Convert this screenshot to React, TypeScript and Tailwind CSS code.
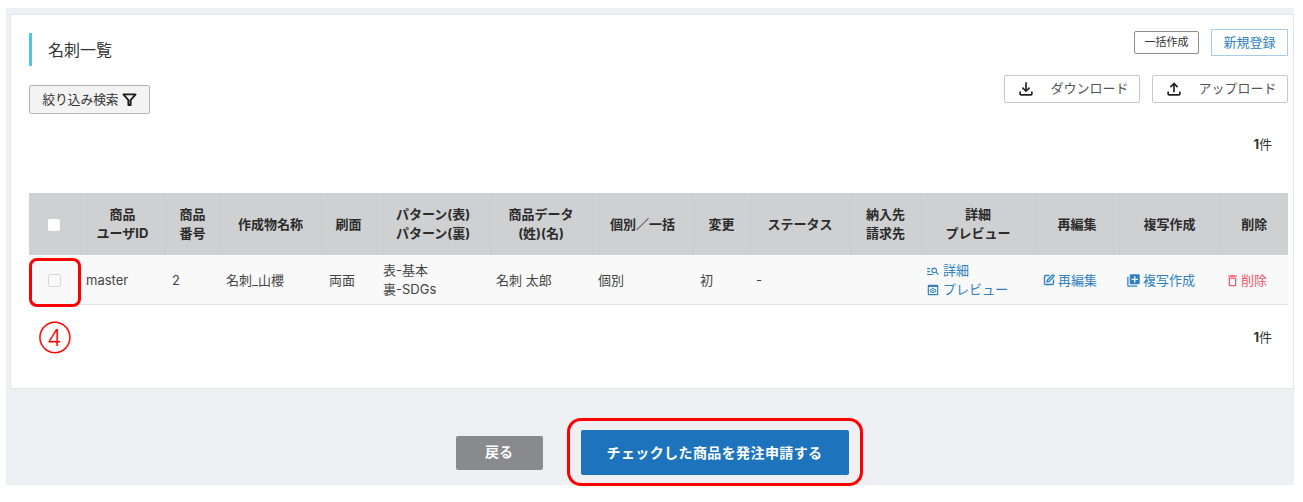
import { LuSquarePen } from 'react-icons/lu';
import {
  MdLibraryAdd,
  MdOutlineDelete,
  MdOutlineFileDownload,
  MdOutlineFileUpload,
  MdOutlineManageSearch,
  MdOutlinePreview,
} from 'react-icons/md';

const FONT = 'font-["Inter","Noto_Sans_CJK_JP",sans-serif]';

const headers = [
  { lines: ['商品', 'ユーザID'], width: 'w-[85px]' },
  { lines: ['商品', '番号'], width: 'w-[55px]' },
  { lines: ['作成物名称'], width: 'w-[101px]' },
  { lines: ['刷面'], width: 'w-[55px]' },
  { lines: ['パターン(表)', 'パターン(裏)'], width: 'w-[114px]' },
  { lines: ['商品データ', '(姓)(名)'], width: 'w-[102px]' },
  { lines: ['個別／一括'], width: 'w-[101px]' },
  { lines: ['変更'], width: 'w-[57px]' },
  { lines: ['ステータス'], width: 'w-[100px]' },
  { lines: ['納入先', '請求先'], width: 'w-[71px]' },
  { lines: ['詳細', 'プレビュー'], width: 'w-[114px]' },
  { lines: ['再編集'], width: 'w-[84px]' },
  { lines: ['複写作成'], width: 'w-[101px]' },
  { lines: ['削除'], width: 'w-[68px]' },
];

function Count() {
  return (
    <div className="h-[20px] pr-[16px] text-right text-[13px] leading-[20px] text-[#333]">
      <span className="font-bold">1</span>件
    </div>
  );
}

function App() {
  return (
    <div className={`h-[502px] w-[1303px] overflow-hidden bg-white pt-[8px] pl-[6px] ${FONT}`}>
      <div className="relative h-[477px] w-[1288px] bg-[#eff0f4] pt-[6px] pl-[4px]">
        {/* card */}
        <div className="h-[375px] w-[1284px] border border-[#e4e5e8] bg-white pr-[5px] pl-[18px]">
          <div className="flex justify-between">
            <div className="pt-[18px]">
              <div className="flex h-[33px] items-center border-l-[3px] border-[#4fc6e4] pl-[16px] text-[16px] text-[#333]">
                名刺一覧
              </div>
              <button className="mt-[19px] flex h-[29px] w-[121px] items-center justify-center gap-[3px] rounded-[2px] border border-[#b4b4b4] bg-[#f3f3f3] text-[12.7px] text-[#333]">
                絞り込み検索
                <svg className="h-[15px] w-[15px]" viewBox="0 0 16 16" fill="none" stroke="#1c1c1c" strokeWidth="2" strokeLinejoin="round">
                  <path d="M1.5 2.5h13L9.2 8.6v5.2H6.8V8.6z" />
                </svg>
              </button>
            </div>
            <div className="pt-[14px]">
              <div className="flex h-[27px] items-center justify-end gap-[12px]">
                <button className="h-[23px] w-[65px] rounded-[2px] border border-[#8c8c8c] bg-white text-[11px] text-[#333]">
                  一括作成
                </button>
                <button className="h-[27px] w-[77px] border border-[#a9cde8] bg-white text-[13px] text-[#2e80c2]">
                  新規登録
                </button>
              </div>
              <div className="mt-[19px] flex justify-end gap-[12px]">
                <button className="flex h-[28px] w-[136px] items-center justify-center gap-[14px] rounded-[2px] border border-[#c8c8c8] bg-white pl-[1px] text-[13px] text-[#555]">
                  <MdOutlineFileDownload className="text-[20px] text-[#222]" />
                  ダウンロード
                </button>
                <button className="flex h-[28px] w-[136px] items-center justify-center gap-[14px] rounded-[2px] border border-[#c8c8c8] bg-white pl-[1px] text-[13px] text-[#555]">
                  <MdOutlineFileUpload className="text-[20px] text-[#222]" />
                  アップロード
                </button>
              </div>
            </div>
          </div>

          <div className="mt-[20px]">
            <Count />
          </div>

          <table className="mt-[39px] w-[1259px] table-fixed border-collapse text-[13px] text-[#444]">
            <thead>
              <tr className="h-[62px] bg-[#cfd0d2]">
                <th className="w-[51px] border-r border-[#cbccce] text-center">
                  <input type="checkbox" className="h-[12px] w-[12px] appearance-none rounded-[2px] bg-white align-middle" />
                </th>
                {headers.map((h) => (
                  <th key={h.lines[0]} className={`${h.width} border-r border-[#cbccce] text-center text-[13px] leading-[19px] font-bold text-[#2b2b2b] last:border-r-0`}>
                    {h.lines.map((l) => (
                      <div key={l}>{l}</div>
                    ))}
                  </th>
                ))}
              </tr>
            </thead>
            <tbody>
              <tr className="h-[49px] border-b border-[#e2e2e2] bg-[#f9f9f9] [&>td]:pt-[2px]">
                <td className="text-center">
                  <input type="checkbox" className="h-[13px] w-[13px] appearance-none rounded-[2px] border border-[#d8d8d8] bg-[#f9f9f9] align-middle" />
                </td>
                <td className="px-[6px]">master</td>
                <td className="px-[7px]">2</td>
                <td className="px-[6px]">名刺_山櫻</td>
                <td className="px-[8px]">両面</td>
                <td className="px-[7px] leading-[19px]">
                  <div>表-基本</div>
                  <div>裏-SDGs</div>
                </td>
                <td className="px-[6px]">名刺 太郎</td>
                <td className="px-[6px]">個別</td>
                <td className="px-[7px]">初</td>
                <td className="px-[6px]">-</td>
                <td></td>
                <td className="px-[5px] leading-[19px] text-[#2e80c2]">
                  <div className="flex items-center gap-[3px]">
                    <MdOutlineManageSearch className="text-[14px]" />
                    詳細
                  </div>
                  <div className="flex items-center gap-[3px]">
                    <MdOutlinePreview className="text-[14px]" />
                    プレビュー
                  </div>
                </td>
                <td className="px-[8px] text-[#2e80c2]">
                  <div className="flex items-center gap-[3px]">
                    <LuSquarePen className="text-[12px]" strokeWidth={2.6} />
                    再編集
                  </div>
                </td>
                <td className="px-[7px] text-[#2e80c2]">
                  <div className="flex items-center gap-[2px]">
                    <MdLibraryAdd className="text-[15px]" />
                    複写作成
                  </div>
                </td>
                <td className="px-[5px] text-[#f4566f]">
                  <div className="flex items-center gap-[1px]">
                    <MdOutlineDelete className="text-[15px]" />
                    削除
                  </div>
                </td>
              </tr>
            </tbody>
          </table>

          <div className="mt-[22px]">
            <Count />
          </div>
        </div>

        {/* footer buttons */}
        <div className="mt-[41px] flex items-center justify-center gap-[38px]">
          <button className="h-[34px] w-[87px] rounded-[2px] bg-[#888a8c] pb-[2px] text-[14px] font-bold text-white">
            戻る
          </button>
          <button className="h-[45px] w-[268px] rounded-[2px] bg-[#1d74bd] pb-[1px] text-[14px] font-bold tracking-[0.4px] text-white">
            チェックした商品を発注申請する
          </button>
        </div>

        {/* red annotations */}
        <div className="absolute top-[250px] left-[23px] h-[49px] w-[52px] rounded-[8px] border-[3.5px] border-[#ff0000]" />
        <div className="absolute top-[310px] left-[33px] text-[23px] leading-[40px] font-light text-[#ff0000]">④</div>
        <div className="absolute top-[410px] left-[561px] h-[68px] w-[296px] rounded-[14px] border-[3px] border-[#ff0000]" />
      </div>
    </div>
  );
}

export default App;
